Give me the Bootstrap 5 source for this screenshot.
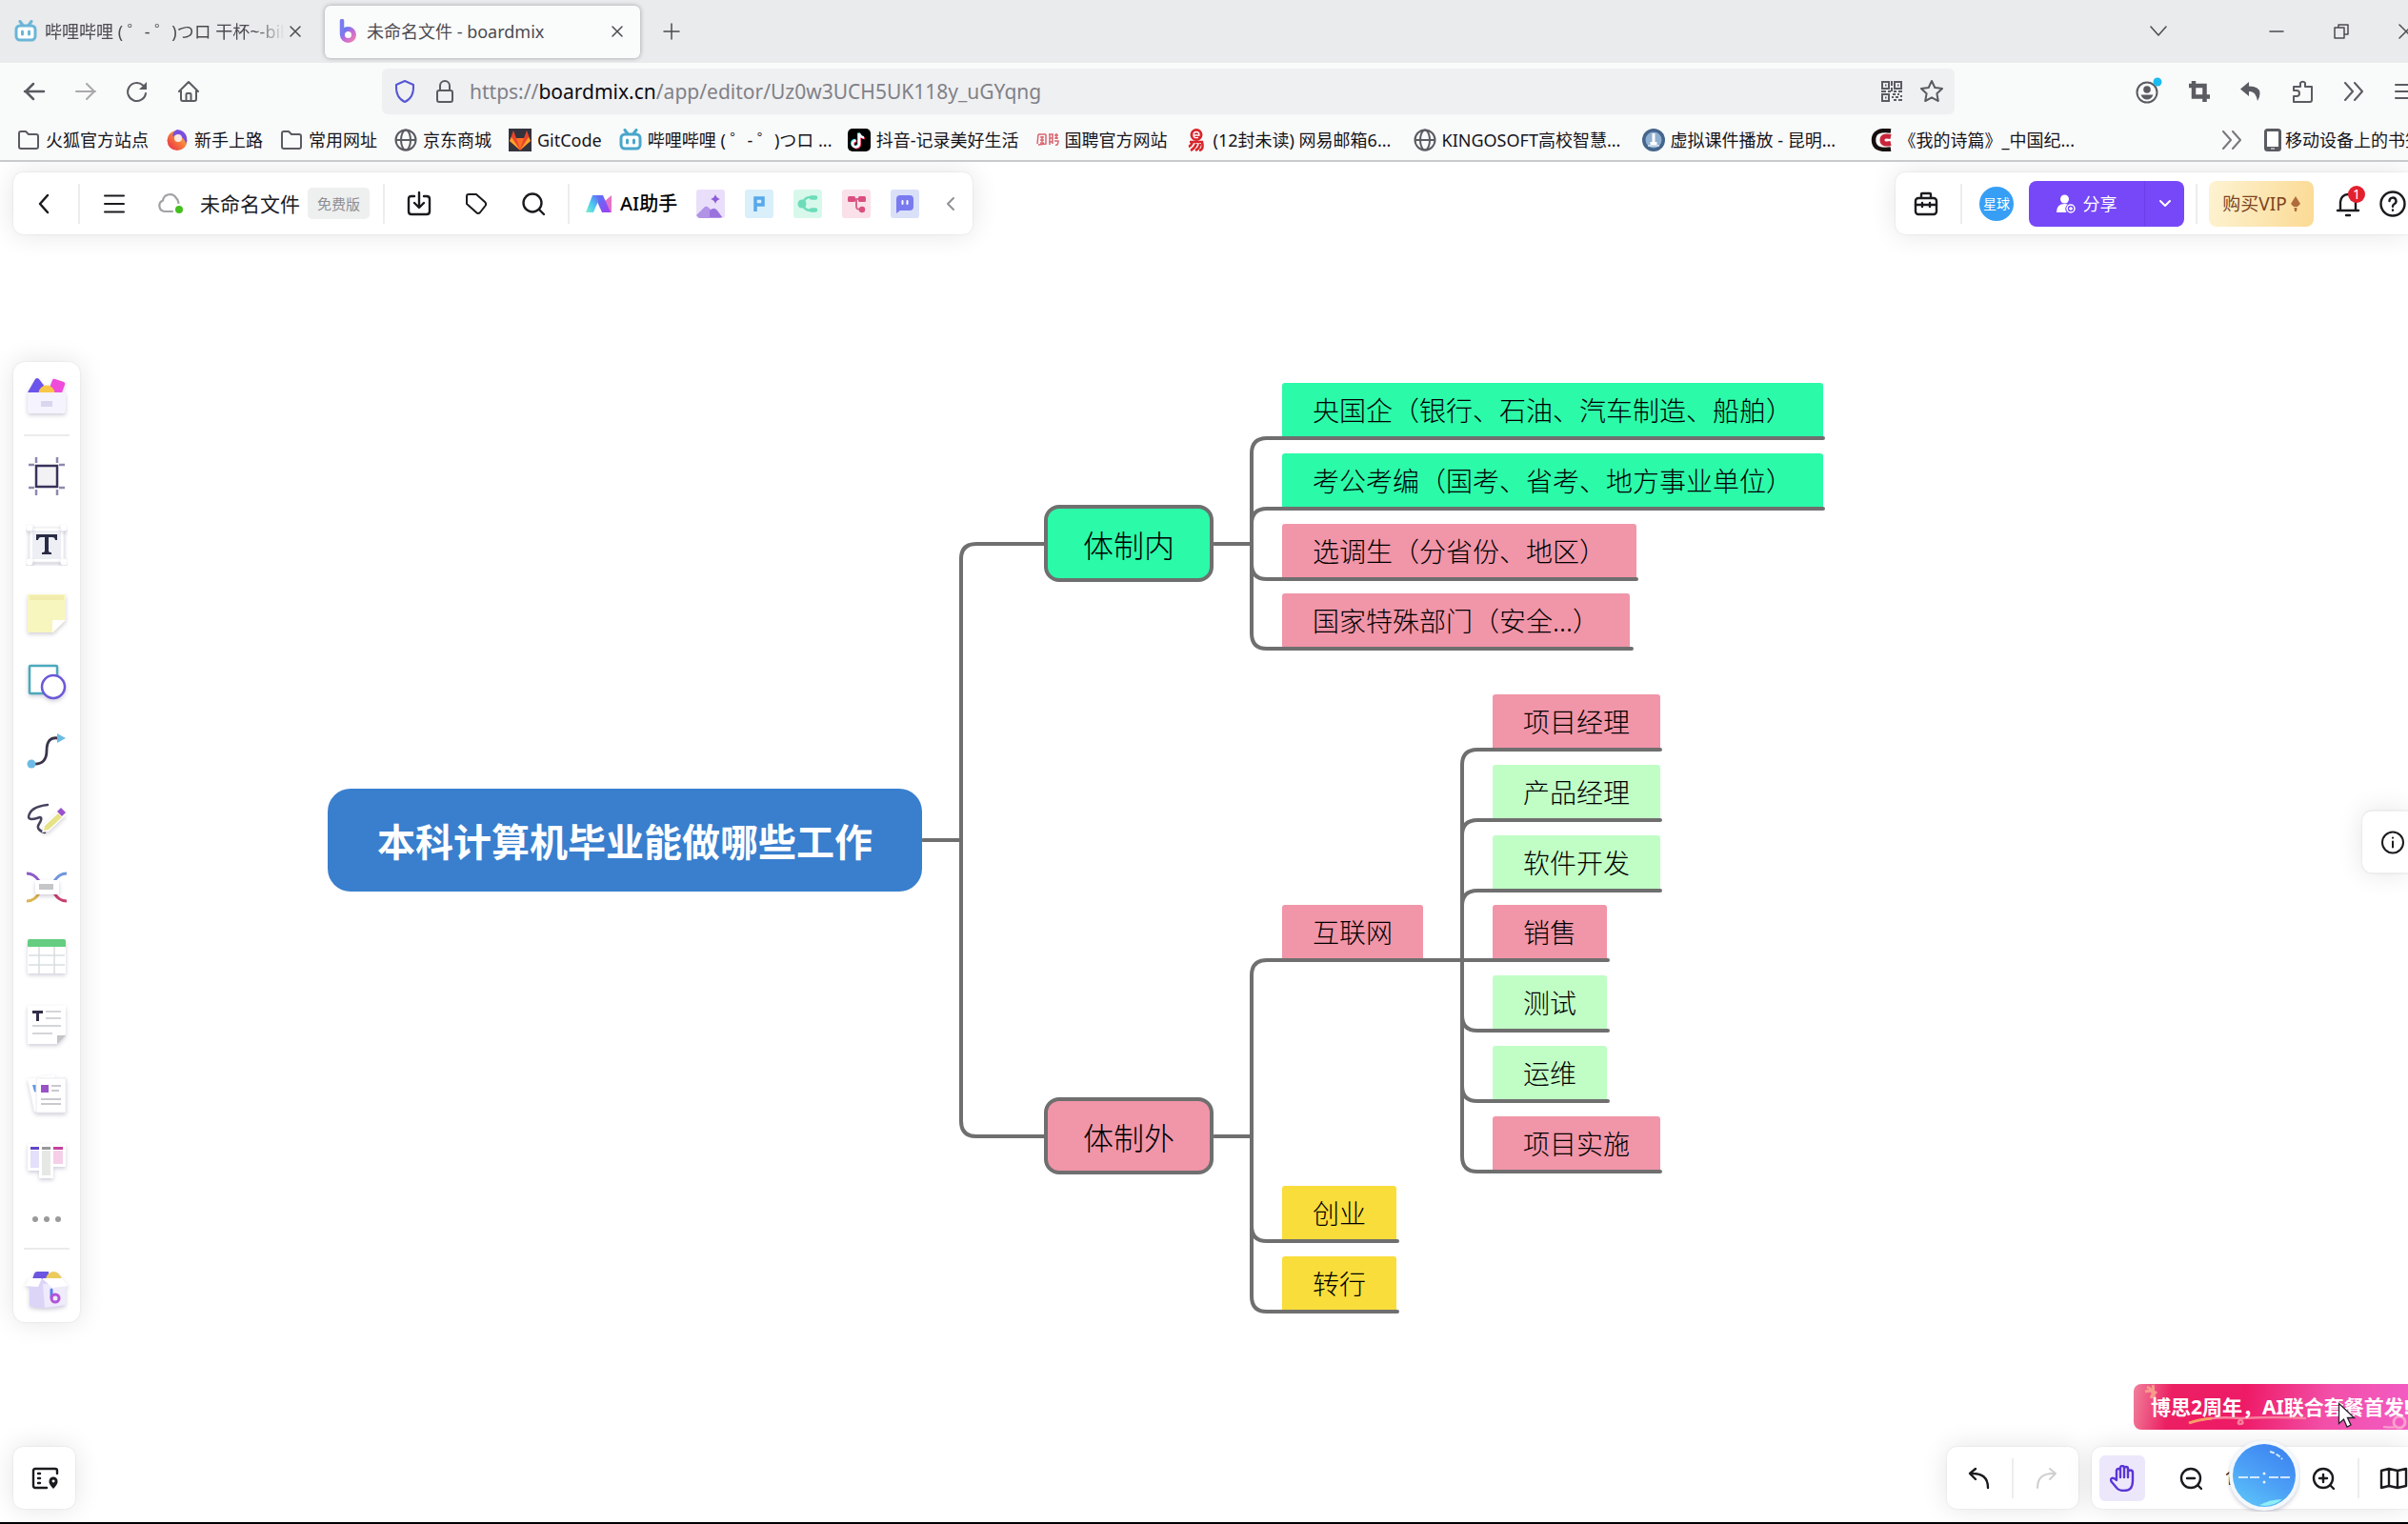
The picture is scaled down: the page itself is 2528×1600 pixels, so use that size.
<!DOCTYPE html>
<html lang="zh-CN">
<head>
<meta charset="utf-8">
<meta name="viewport" content="width=device-width, initial-scale=1">
<title>未命名文件 - boardmix</title>
<link href="https://cdn.jsdelivr.net/npm/bootstrap@5.3.0/dist/css/bootstrap.min.css" rel="stylesheet">
<style>
body{font-family:"Noto Sans","Noto Sans CJK SC",sans-serif;font-size:18px;line-height:24px;color:#15141a;background:#fff;overflow:hidden}
svg{display:block;flex:none}
.line-ic{fill:none;stroke:currentColor;stroke-linecap:round;stroke-linejoin:round}
.line-ic:not([stroke-width]){stroke-width:2}
.plain{border:0;padding:0;background:none;color:inherit;display:flex;align-items:center;justify-content:center;flex:none}
/* browser chrome */
.tabstrip{height:66px;background:#eaebec;color:#4b4b50;overflow:hidden}
.tab-idle{width:327px;padding-left:15px}
.tab-idle .tab-title{width:252px;line-height:32px;overflow:hidden;white-space:nowrap;-webkit-mask-image:linear-gradient(90deg,#000 220px,transparent 252px);mask-image:linear-gradient(90deg,#000 220px,transparent 252px)}
.tab-live{width:331px;height:55px;background:#fafbfb;border-radius:6px;box-shadow:0 0 5px rgba(0,0,0,.32);padding:0 14px;margin-left:14px;gap:10px}
.win-btn{width:68px;height:66px}
.win-group{margin-right:-32px}
.navrow{height:54px;background:#f9fafa;color:#5b5b62;overflow:hidden;padding:6px 0 0 9px}
.nav-btn{width:54px;height:48px}
.nav-tools{margin-right:-24px;margin-left:176px}
.urlbox{height:48px;background:#eff0f2;border-radius:6px;margin-left:176px;padding:0 3px;min-width:0}
.urlbox .plain{width:42px;height:48px}
.url-text{font-size:21px;line-height:36px;color:#818187;padding-left:5px}
.url-text b{font-weight:400;color:#0c0c12}
.bookrow{height:50px;background:#f9fafa;border-bottom:2px solid #c9cacb;padding:5px 0 0 18px;gap:18px;overflow:hidden}
.bookrow a{color:#15141a;text-decoration:none;white-space:nowrap;gap:6px;flex:none}
.bm-long{width:222px}
.bm-tail{width:151px}
.bm-more{margin-left:auto;margin-right:4px;width:24px}
/* board */
.board{background:#fff;overflow:hidden}
.panel{background:#fff;border-radius:10px;box-shadow:0 0 28px rgba(0,0,0,.11),0 0 2px rgba(0,0,0,.12);height:65px;color:#1b1b1f}
.panel-open{border-radius:10px 0 0 10px}
.grp{height:42px;display:flex;align-items:center;padding:0 16px}
.grp+.grp{border-left:2px solid #ededee}
.grp-first{padding-left:12px}
.grp-doc{padding-right:14px}
.grp-user{padding:0 8px 0 18px}
.grp-undo{padding:0 14px}
.sq{width:40px;height:40px}
.tools{gap:20px}
.doc-name{font-size:21px}
.free-tag{background:#eeefef;color:#8d8d90;font-size:15px;border-radius:5px;width:65px;height:33px}
.ai-name{font-size:20px;font-weight:500;color:#000}
.ai-apps{gap:21px;margin:0 26px 0 20px}
.ai-app{width:30px;height:30px;border-radius:3px}
.avatar-dot{width:36px;height:36px;border-radius:50%;background:#369ff5;color:#fff;font-size:14px}
.share{height:48px;border-radius:8px;background:#7748f8;color:#fff;overflow:hidden}
.share-main{width:121px;height:48px;gap:8px}
.share-more{width:42px;height:48px;border-left:1px solid #6d3fea}
.vip{width:110px;height:48px;border-radius:8px;background:linear-gradient(100deg,#fdf3d2,#fbda94);color:#7d4420;font-size:19px;gap:4px}
.help-btn{margin-left:13px}
.count-dot{width:18px;height:18px;border-radius:50%;background:#e3202e;color:#fff;font-size:14px;line-height:18px;text-align:center;left:20px;top:1px}
.over{position:absolute}
.over-tl{left:14px;top:11px}
.over-tr{right:0;top:11px}
.over-side{left:14px}
.over-bl{left:14px;bottom:14px}
.over-br{right:0;bottom:14px;gap:14px}
.over-info{right:0}
.side{width:70px;height:auto;padding:12px 0;border-radius:12px}
.side .plain{width:44px;height:44px}
.side-list{gap:28px}
.side .dots-btn{height:20px}
.side-rule{width:48px;height:2px;background:#ebebec;margin:20px 0}
.sh{filter:drop-shadow(0 2px 2px rgba(40,30,80,.22))}
.node{position:absolute;height:56px;padding:0 32px;border-radius:3px 3px 0 0;font-family:"Noto Sans CJK SC","Noto Sans",sans-serif;font-size:28px;font-weight:300;color:#000;display:flex;align-items:center;white-space:nowrap}
.node-root{height:108px;padding:0 52px;border-radius:24px;font-size:40px;font-weight:700;color:#fff;background:#397fce}
.node-main{height:81px;padding:0 37px;border-radius:16px;border:4px solid #6f6f6f;font-size:32px}
.c-teal{background:#2bfaa9}.c-pink{background:#f195a8}.c-mint{background:#c1fec6}.c-gold{background:#f9dd3b}
.links{position:absolute;left:0;top:0;width:100%;height:100%;fill:none;stroke:#6f6f6f;stroke-width:4;stroke-linecap:round}
.promo{right:0;bottom:97px;width:288px;height:48px;border-radius:8px 0 0 8px;background:linear-gradient(100deg,#f0819b 0,#ec1f63 14%,#ee1a66 40%,#f24fa8 70%,#f25cc4 100%);color:#fff;font-weight:700;font-size:21px;padding-left:18px;white-space:nowrap;overflow:hidden;text-decoration:none}
.promo svg{position:absolute;left:0;top:0}
.promo span{position:relative;line-height:36px}
.pointer{right:54px;bottom:98px}
.hand{width:48px;height:48px;border-radius:6px;background:#ede7fc;color:#5a35d6}
.zoom-val{width:99px;height:40px;font-size:19px;justify-content:flex-start;padding-left:15px;position:relative}
.ball{left:19px;top:-21px}
.taskline{height:2px;background:#000}
</style>
</head>
<body>
<div class="d-flex flex-column vh-100">
<header>
 <div class="tabstrip d-flex align-items-center">
  <div class="tab-idle d-flex align-items-center">
   <svg width="24" height="24" viewBox="0 0 24 24" fill="none" stroke="#6ab6d8" stroke-width="3" stroke-linecap="round"><rect x="2" y="6" width="20" height="15" rx="4" fill="#fff"/><path d="M6 1.5l3 4M18 1.5l-3 4M8.500 12v3M15.500 12v3"/></svg>
   <span class="tab-title ms-2">哔哩哔哩 ( ゜- ゜)つロ 干杯~-bilibili</span>
   <button class="plain ms-1" aria-label="关闭标签页"><svg class="line-ic" width="14" height="14" viewBox="0 0 14 14" stroke-width="1.500"><path d="M2 2l10 10M12 2L2 12"/></svg></button>
  </div>
  <div class="tab-live d-flex align-items-center">
   <svg width="20" height="26" viewBox="0 0 20 26"><defs><linearGradient id="bm" x1="0" y1="0" x2="1" y2="1"><stop offset="0" stop-color="#4d7df6"/><stop offset=".45" stop-color="#b46be0"/><stop offset="1" stop-color="#f27bb0"/></linearGradient></defs><circle cx="10.500" cy="16.500" r="6" fill="none" stroke="url(#bm)" stroke-width="5"/><path d="M4 2v14" stroke="#7b7bf0" stroke-width="4.500" stroke-linecap="round"/></svg>
   <span class="text-nowrap">未命名文件 - boardmix</span>
   <button class="plain ms-auto" aria-label="关闭标签页"><svg class="line-ic" width="20" height="14" viewBox="0 0 20 14" stroke-width="1.500"><path d="M5 2l10 10M15 2L5 12"/></svg></button>
  </div>
  <button class="plain ms-4" aria-label="新建标签页"><svg class="line-ic" width="18" height="18" viewBox="0 0 18 18" stroke-width="1.500"><path d="M9 1v16M1 9h16"/></svg></button>
  <div class="ms-auto d-flex win-group">
   <button class="plain win-btn me-5" aria-label="列出所有标签页"><svg class="line-ic" width="20" height="12" viewBox="0 0 20 12" stroke-width="1.500"><path d="M2 1l8 9 8-9"/></svg></button>
   <button class="plain win-btn ms-2" aria-label="最小化"><svg class="line-ic" width="16" height="16" viewBox="0 0 16 16" stroke-width="1.500"><path d="M1 8h14"/></svg></button>
   <button class="plain win-btn" aria-label="还原"><svg class="line-ic" width="16" height="16" viewBox="0 0 16 16" stroke-width="1.500"><path d="M1 4h10v11H1zM5 4V1h10v10h-4"/></svg></button>
   <button class="plain win-btn" aria-label="关闭"><svg class="line-ic" width="16" height="16" viewBox="0 0 16 16" stroke-width="1.500"><path d="M1 1l14 14M15 1L1 15"/></svg></button>
  </div>
 </div>
 <nav class="navrow d-flex align-items-center" aria-label="导航">
  <button class="plain nav-btn" aria-label="后退"><svg class="line-ic" width="24" height="24" viewBox="0 0 24 24" stroke-width="2.500"><path d="M22 12H2M11 4l-8 8 8 8"/></svg></button>
  <button class="plain nav-btn opacity-50" aria-label="前进"><svg class="line-ic" width="24" height="24" viewBox="0 0 24 24"><path d="M2 12h20M13 4l8 8-8 8"/></svg></button>
  <button class="plain nav-btn" aria-label="刷新"><svg class="line-ic" width="24" height="24" viewBox="0 0 24 24"><path d="M21 14a9.500 9.500 0 1 1-3-8.500"/><path d="M22 2v8h-8z" fill="currentColor" stroke="none"/></svg></button>
  <button class="plain nav-btn" aria-label="主页"><svg class="line-ic" width="24" height="24" viewBox="0 0 24 24"><path d="M2 12L12 2l10 10M4 11v9q0 2 2 2h12q2 0 2-2v-9M9.500 22v-7q0-1 1-1h3q1 0 1 1v7"/></svg></button>
  <div class="urlbox d-flex align-items-center flex-grow-1">
   <button class="plain" aria-label="跟踪保护"><svg class="line-ic" width="24" height="26" viewBox="0 0 24 26"><path d="M12 2l9 4c.5 8-2 15-9 18C5 21 2.500 14 3 6z" stroke="#5757d4"/></svg></button>
   <button class="plain" aria-label="连接安全"><svg class="line-ic" width="22" height="26" viewBox="0 0 22 26"><rect x="3" y="12" width="16" height="12" rx="2"/><path d="M6 12V7a5 5 0 0 1 10 0v5"/></svg></button>
   <div class="url-text flex-grow-1 text-nowrap" role="textbox" tabindex="0" aria-label="地址">https://<b>boardmix.cn</b>/app/editor/Uz0w3UCH5UK118y_uGYqng</div>
   <button class="plain" aria-label="二维码"><svg width="24" height="24" viewBox="0 0 24 24" fill="none" stroke="#5b5b62" stroke-width="2"><path d="M2 2h7v7H2zM15 2h7v7h-7zM2 15h7v7H2z"/><path d="M5 5.500h1.500M18 5.500h1.500M5 18.500h1.500M12 1v5M12 8v4M1 12h5M8 12h3M14 12h3M19 12h4M13 15h3M18 15h2M21 17h2M12 18h2M16 18h3M14 21h3M19 21h4"/></svg></button>
   <button class="plain" aria-label="收藏"><svg class="line-ic" width="26" height="26" viewBox="0 0 26 26"><path d="M13 2l3.300 7 7.700 1-5.600 5.300 1.400 7.700L13 19.300 6.200 23l1.400-7.700L2 10l7.700-1z"/></svg></button>
  </div>
  <div class="d-flex nav-tools">
   <button class="plain nav-btn" aria-label="账户"><svg class="line-ic" width="30" height="32" viewBox="0 0 30 32"><circle cx="14" cy="17" r="10.500"/><circle cx="14" cy="14" r="3.800" fill="currentColor" stroke="none"/><path d="M7.500 19.500h13q-2 5-6.500 5t-6.500-5z" fill="currentColor" stroke="none"/><circle cx="25" cy="6" r="4.500" fill="#1cbcf0" stroke="none"/></svg></button>
   <button class="plain nav-btn" aria-label="截图"><svg width="24" height="24" viewBox="0 0 24 24" fill="none" stroke="#5b5b62" stroke-width="4.500"><path d="M6 1v16.500h17M1 6h16.500v17"/></svg></button>
   <button class="plain nav-btn" aria-label="撤销关闭"><svg width="24" height="24" viewBox="0 0 24 24" fill="#5b5b62"><path d="M10 2L1 9.500 10 17v-5q7-1 9 10 8-15-9-15.500z"/></svg></button>
   <button class="plain nav-btn" aria-label="扩展"><svg class="line-ic" width="24" height="26" viewBox="0 0 24 26"><path d="M3 24V18h3a3 3 0 0 0 0-6H3V8h7V4a3 3 0 0 1 5 0v4h7v14q0 2-2 2z"/></svg></button>
   <button class="plain nav-btn" aria-label="更多工具"><svg class="line-ic" width="22" height="20" viewBox="0 0 22 20"><path d="M2 1l8 9-8 9M12 1l8 9-8 9"/></svg></button>
   <button class="plain nav-btn" aria-label="菜单"><svg class="line-ic" width="22" height="20" viewBox="0 0 22 20"><path d="M1 3h20M1 10h20M1 17h20"/></svg></button>
  </div>
 </nav>
 <div class="bookrow d-flex align-items-center">
  <a href="#" class="d-flex align-items-center"><svg class="line-ic" width="24" height="24" viewBox="0 0 24 24"><path stroke="#5b5b62" d="M2 5q0-2 2-2h5l3 3h8q2 0 2 2v11q0 2-2 2H4q-2 0-2-2z"/></svg>火狐官方站点</a>
  <a href="#" class="d-flex align-items-center"><svg width="24" height="24" viewBox="0 0 24 24"><defs><linearGradient id="ff" x1="0" y1="1" x2="1" y2="0"><stop offset="0" stop-color="#e8234e"/><stop offset=".5" stop-color="#f5793a"/><stop offset="1" stop-color="#ffd04a"/></linearGradient></defs><circle cx="12" cy="12.500" r="10.500" fill="url(#ff)"/><path d="M12 1a11 11 0 0 1 10 8q1 4-1 7-1-7-9-9-4 0-5 2 0-6 5-8z" fill="#7a4fe0"/><circle cx="13" cy="10" r="4" fill="#fbe6e0"/></svg>新手上路</a>
  <a href="#" class="d-flex align-items-center"><svg class="line-ic" width="24" height="24" viewBox="0 0 24 24"><path stroke="#5b5b62" d="M2 5q0-2 2-2h5l3 3h8q2 0 2 2v11q0 2-2 2H4q-2 0-2-2z"/></svg>常用网址</a>
  <a href="#" class="d-flex align-items-center"><svg width="24" height="24" viewBox="0 0 24 24" fill="none" stroke="#5b5b62" stroke-width="2"><circle cx="12" cy="12" r="10.500"/><ellipse cx="12" cy="12" rx="5" ry="10.500"/><path d="M2 12h20"/></svg>京东商城</a>
  <a href="#" class="d-flex align-items-center"><svg width="24" height="24" viewBox="0 0 24 24"><path fill="#33333d" d="M0 0h24v24H0z"/><path d="M1 13L5 2l3 8h8l3-8 4 11-11 10z" fill="#e8452c"/><path d="M8 10h8l-4 12z" fill="#fc6d26"/><path d="M1 13l2-4 9 13.500zM23 13l-2-4-9 13.500z" fill="#fca326"/></svg>GitCode</a>
  <a href="#" class="d-flex align-items-center bm-long"><svg width="24" height="24" viewBox="0 0 24 24" fill="none" stroke="#4aa6cc" stroke-width="3" stroke-linecap="round"><rect x="2" y="6" width="20" height="15" rx="4" fill="#fff"/><path d="M6 1.500l3 4M18 1.500l-3 4M8.500 12v3M15.500 12v3"/></svg><span>哔哩哔哩 ( ゜- ゜)つロ ...</span></a>
  <a href="#" class="d-flex align-items-center"><svg width="24" height="24" viewBox="0 0 24 24" fill="none" stroke-width="2.500"><rect width="24" height="24" rx="5" fill="#000"/><path d="M12 5v11a3.500 3.500 0 1 1-3.500-3.500M12 5q1 4 5 4.500" stroke="#29e0e4" transform="translate(-.8 -.6)"/><path d="M12 5v11a3.500 3.500 0 1 1-3.500-3.500M12 5q1 4 5 4.500" stroke="#f0335c" transform="translate(.9 .7)"/><path d="M12 5v11a3.500 3.500 0 1 1-3.500-3.500M12 5q1 4 5 4.500" stroke="#fff"/></svg>抖音-记录美好生活</a>
  <a href="#" class="d-flex align-items-center"><svg width="24" height="24" viewBox="0 0 24 24" fill="none" stroke="#dc6670" stroke-width="1.500"><path d="M2 6h8M2 6l-1 10M10 6v10l-8 1M4 9h4M4 12h4M6 8v6M4 15h4M13 6h5M14 6v11M17 6v10M14 10h3M13 14h4M19 7h4M21 5v6M19 10h4M19 13h4q0 5-3 4"/></svg>国聘官方网站</a>
  <a href="#" class="d-flex align-items-center bm-long"><svg width="24" height="24" viewBox="0 0 24 24" fill="none" stroke="#d8262c" stroke-width="2.500"><circle cx="12" cy="6.500" r="6.500" fill="#d8262c" stroke="none"/><path d="M9 7h6q0-3.500-3-3.500T9 7t5 2.500" stroke="#fff" stroke-width="1.300"/><path d="M5 14h13q2 8-3 9M8 14q-1 4-4 5M12 16q-2 5-6 7M16 16q-1 5-5 7"/></svg><span>(12封未读) 网易邮箱6...</span></a>
  <a href="#" class="d-flex align-items-center bm-long"><svg width="24" height="24" viewBox="0 0 24 24" fill="none" stroke="#5b5b62" stroke-width="2"><circle cx="12" cy="12" r="10.500"/><ellipse cx="12" cy="12" rx="5" ry="10.500"/><path d="M2 12h20"/></svg><span>KINGOSOFT高校智慧...</span></a>
  <a href="#" class="d-flex align-items-center bm-long"><svg width="24" height="24" viewBox="0 0 24 24"><circle cx="12" cy="12" r="12" fill="#44658c"/><circle cx="12" cy="12" r="8.500" fill="#8fb0d0"/><path d="M10.500 5h3v9h2v3h-7v-3h2z" fill="#fff"/><path d="M6 18h12" stroke="#dfe9f3" stroke-width="1.500"/></svg><span>虚拟课件播放 - 昆明...</span></a>
  <a href="#" class="d-flex align-items-center bm-long"><svg width="24" height="24" viewBox="0 0 24 24" fill="none"><path d="M21 2.500Q3 0 3 12t18 9.500" stroke="#16100f" stroke-width="4.500"/><path d="M21 8.500q-9-2-9 3.500t9 3.500" stroke="#c9253a" stroke-width="5"/></svg><span>《我的诗篇》_中国纪...</span></a>
  <button class="plain bm-more" aria-label="更多书签"><svg class="line-ic" width="22" height="20" viewBox="0 0 22 20"><path stroke="#77777c" d="M2 1l8 9-8 9M12 1l8 9-8 9"/></svg></button>
  <a href="#" class="d-flex align-items-center gap-1 bm-tail"><svg width="18" height="24" viewBox="0 0 18 24"><rect x="1.500" y="1.500" width="15" height="21" rx="2" fill="#fff" stroke="#5b5b62" stroke-width="3"/><path d="M2 19h14v4H2z" fill="#5b5b62"/><path d="M7 21h4" stroke="#fff"/></svg>移动设备上的书签</a>
 </div>
</header>

<main class="board position-relative flex-grow-1">
 <svg class="links" aria-hidden="true">
  <path d="M969 712h40M1096 401h-71q-16 0-16 16v590q0 16 16 16h71"/>
  <path d="M1275 401h39M1914 290H1330q-16 0-16 16v189q0 16 16 16h383M1914 364H1330q-16 0-16 16M1314 422q0 16 16 16h388"/>
  <path d="M1275 1023h39M1535 838H1330q-16 0-16 16v337q0 16 16 16h137M1314 1117q0 16 16 16h137"/>
  <path d="M1743 617h-192q-16 0-16 16v411q0 16 16 16h192M1743 691h-192q-16 0-16 16M1743 765h-192q-16 0-16 16M1535 838h153M1535 896q0 16 16 16h137M1535 970q0 16 16 16h137"/>
 </svg>
 <div class="node node-root" style="left:344px;top:658px">本科计算机毕业能做哪些工作</div>
 <div class="node node-main c-teal" style="left:1096px;top:360px">体制内</div>
 <div class="node node-main c-pink" style="left:1096px;top:982px">体制外</div>
 <div class="node c-teal" style="left:1346px;top:232px">央国企（银行、石油、汽车制造、船舶）</div>
 <div class="node c-teal" style="left:1346px;top:306px">考公考编（国考、省考、地方事业单位）</div>
 <div class="node c-pink" style="left:1346px;top:380px">选调生（分省份、地区）</div>
 <div class="node c-pink" style="left:1346px;top:453px">国家特殊部门（安全...）</div>
 <div class="node c-pink" style="left:1346px;top:780px">互联网</div>
 <div class="node c-gold" style="left:1346px;top:1075px">创业</div>
 <div class="node c-gold" style="left:1346px;top:1149px">转行</div>
 <div class="node c-pink" style="left:1567px;top:559px">项目经理</div>
 <div class="node c-mint" style="left:1567px;top:633px">产品经理</div>
 <div class="node c-mint" style="left:1567px;top:707px">软件开发</div>
 <div class="node c-pink" style="left:1567px;top:780px">销售</div>
 <div class="node c-mint" style="left:1567px;top:854px">测试</div>
 <div class="node c-mint" style="left:1567px;top:928px">运维</div>
 <div class="node c-pink" style="left:1567px;top:1002px">项目实施</div>

 <div class="panel over over-tl d-flex align-items-center">
  <div class="grp grp-first"><button class="plain sq" aria-label="返回"><svg class="line-ic" width="14" height="22" viewBox="0 0 14 22" stroke-width="2.500"><path d="M11 2L3 11l8 9"/></svg></button></div>
  <div class="grp grp-doc">
   <button class="plain sq" aria-label="主菜单"><svg class="line-ic" width="22" height="20" viewBox="0 0 22 20"><path d="M1 1.500h20M1 10h20M1 18.500h20"/></svg></button>
   <svg class="ms-4" width="34" height="24" viewBox="0 0 34 24" fill="none"><path d="M17 20H9a6 6 0 0 1-2-11.500A7.500 7.500 0 0 1 21 6q2 1.500 2.500 5" stroke="#a2a2a6" stroke-width="2.200" stroke-linecap="round"/><circle cx="24" cy="18" r="4" fill="#45bf20"/></svg>
   <span class="doc-name mx-2 ps-1">未命名文件</span>
   <span class="free-tag d-flex align-items-center justify-content-center">免费版</span>
  </div>
  <div class="grp tools">
   <button class="plain sq" aria-label="导出"><svg class="line-ic" width="26" height="26" viewBox="0 0 26 26" stroke-width="2.400"><path d="M8 5H5q-3 0-3 3v13q0 3 3 3h16q3 0 3-3V8q0-3-3-3h-3M13 1v15M8 12l5 5 5-5"/></svg></button>
   <button class="plain sq" aria-label="标签"><svg class="line-ic" width="26" height="26" viewBox="0 0 26 26"><path d="M3 5q0-2 2-2h8l9 8q2 2 .5 4L17 22q-2 2-4 0L3 13z"/></svg></button>
   <button class="plain sq" aria-label="搜索"><svg class="line-ic" width="26" height="26" viewBox="0 0 26 26" stroke-width="2.400"><circle cx="12" cy="12" r="9.500"/><path d="M19 19l5 5"/></svg></button>
  </div>
  <div class="grp">
   <button class="plain" aria-label="AI助手"><svg width="29" height="20" viewBox="0 0 29 20"><defs><linearGradient id="g1" x1="1" y1="0" x2="0" y2="1"><stop offset="0" stop-color="#6a5af5"/><stop offset=".5" stop-color="#4ac5f2"/><stop offset="1" stop-color="#7cf0c8"/></linearGradient><linearGradient id="g2" x1="0" y1="0" x2="1" y2="1"><stop offset="0" stop-color="#4f7df8"/><stop offset="1" stop-color="#a03df0"/></linearGradient></defs><path d="M20 8l8-7v18h-5z" fill="#e573c8"/><path d="M10 1h9l8 18h-9z" fill="url(#g2)"/><path d="M8 1h6q2 1 1 4L9 19H1z" fill="url(#g1)"/></svg><span class="ai-name ms-2">AI助手</span></button>
   <div class="d-flex ai-apps">
    <button class="plain ai-app" aria-label="AI 图片"><svg width="30" height="30" viewBox="0 0 30 30"><rect width="30" height="30" rx="3" fill="#eadffa"/><path d="M0 27l9-9q2-1 4 1l2 2 2-1q2-1 4 1l6 8-2 1H3z" fill="#b193e6"/><path d="M14 22l4-2q2 0 4 2l5 7H14z" fill="#9a72de"/><path d="M20 5q1 4 5 5-4 1-5 5-1-4-5-5 4-1 5-5z" fill="#8e5cd6"/></svg></button>
    <button class="plain ai-app" aria-label="AI PPT"><svg width="30" height="30" viewBox="0 0 30 30"><rect width="30" height="30" rx="3" fill="#d9effa"/><path d="M11 23V9h8v7h-8" fill="none" stroke="#56a9ea" stroke-width="3.500"/></svg></button>
    <button class="plain ai-app" aria-label="AI 思维导图"><svg width="30" height="30" viewBox="0 0 30 30"><rect width="30" height="30" rx="3" fill="#d8f8ec"/><path d="M21 8h-3q-7 0-8 7 1 7 8 7h3" fill="none" stroke="#6ddcb9" stroke-width="2.500"/><circle cx="9" cy="15" r="4.500" fill="#6ddcb9"/><path d="M19 8.500h4M19 21.500h4" stroke="#6ddcb9" stroke-width="4.500" stroke-linecap="round"/></svg></button>
    <button class="plain ai-app" aria-label="AI 流程图"><svg width="30" height="30" viewBox="0 0 30 30"><rect width="30" height="30" rx="3" fill="#fae0e8"/><path d="M9 10h12M15 10v8q0 3 5 3" fill="none" stroke="#da648c" stroke-width="2"/><rect x="6" y="7" width="8" height="6" rx="1.500" fill="#da4f80"/><rect x="17" y="7" width="8" height="6" rx="1.500" fill="#da4f80"/><circle cx="21" cy="21" r="3.200" fill="#da4f80"/></svg></button>
    <button class="plain ai-app" aria-label="AI 对话"><svg width="30" height="30" viewBox="0 0 30 30"><rect width="30" height="30" rx="3" fill="#d9e0f8"/><path d="M6 10q0-4 4-4h10q4 0 4 4v8q0 4-4 4H10l-4 3z" fill="#7a7af0"/><path d="M12.500 12v3M17.500 12v3" stroke="#fff" stroke-width="2" stroke-linecap="round"/></svg></button>
   </div>
   <button class="plain" aria-label="收起"><svg class="line-ic" width="14" height="16" viewBox="0 0 14 16"><path stroke="#919195" d="M10 2L4 8l6 6"/></svg></button>
  </div>
 </div>

 <div class="panel panel-open over over-tr d-flex align-items-center">
  <div class="grp grp-first"><button class="plain sq" aria-label="工具箱"><svg class="line-ic" width="26" height="26" viewBox="0 0 26 26" stroke-width="2.400"><rect x="2" y="7" width="22" height="17" rx="3"/><path d="M8 6V3q0-1 1-1h8q1 0 1 1v3M2 14h22M9 12v4M17 12v4"/></svg></button></div>
  <div class="grp grp-user">
   <span class="avatar-dot d-flex align-items-center justify-content-center me-3">星球</span>
   <div class="share d-flex me-1">
    <button class="plain share-main"><svg width="20" height="20" viewBox="0 0 20 20" fill="#fff"><circle cx="8.500" cy="5" r="4.500"/><path d="M0 19q0-9 8.500-9 2 0 3.500.8a5 5 0 0 0-2 7.200l.5 1z"/><circle cx="15" cy="15" r="4" fill="none" stroke="#fff" stroke-width="1.500"/><path d="M15 13v4M13 15h4" stroke="#fff" stroke-width="1.300"/></svg>分享</button>
    <button class="plain share-more" aria-label="分享选项"><svg class="line-ic" width="14" height="10" viewBox="0 0 14 10"><path d="M2 2l5 5 5-5"/></svg></button>
   </div>
  </div>
  <div class="grp ps-2 pe-0">
   <button class="plain vip ms-1"><span>购买VIP</span><svg width="10" height="16" viewBox="0 0 10 16"><path d="M5 0l5 8-3 3H3L0 8zM3.500 12h3l-.5 4H4z" fill="#b06a3c"/></svg></button>
   <button class="plain sq ms-3 position-relative" aria-label="通知"><svg class="line-ic" width="26" height="28" viewBox="0 0 26 28" stroke-width="2.400"><path d="M5 20v-8a8 8 0 0 1 16 0v8M2 21h22M11 26h4"/></svg><span class="over count-dot">1</span></button>
   <button class="plain help-btn" aria-label="帮助"><svg class="line-ic" width="30" height="30" viewBox="0 0 30 30" stroke-width="2.400"><circle cx="14" cy="15" r="12.500"/><path d="M10.500 12a3.500 3.500 0 1 1 5 3.200q-1.500.8-1.500 2.600M14 21.500v.2"/></svg></button>
  </div>
 </div>

 <aside class="panel side over over-side top-50 translate-middle-y d-flex flex-column align-items-center">
  <button class="plain" aria-label="素材"><svg class="sh" width="44" height="44" viewBox="0 0 44 44"><path d="M2 20l8-14q2-2 4 0l6 8v6z" fill="#6a54ec"/><path d="M24 18l4-11q1-2 3-1l9 3q2 1 1 3l-3 8H25z" fill="#f04cdb"/><circle cx="22" cy="21" r="8.500" fill="#f7c748"/><path d="M2 20h40v20q0 2-2 2H4q-2 0-2-2z" fill="#f5f3fd"/><path d="M16 29h12v6H16z" fill="#dad6f0"/></svg></button>
  <div class="side-rule"></div>
  <div class="side-list d-flex flex-column align-items-center">
   <button class="plain" aria-label="画框"><svg width="44" height="44" viewBox="0 0 44 44" fill="none"><path d="M11 2v6M33 2v6M11 36v6M33 36v6M3 10h6M35 10h6M3 34h6M35 34h6" stroke="#9088b0" stroke-width="2.500"/><rect x="11" y="11" width="22" height="22" fill="#f2f2f4" stroke="#39325a" stroke-width="2.500"/></svg></button>
   <button class="plain" aria-label="文本"><svg width="44" height="44" viewBox="0 0 44 44"><rect class="sh" x="4" y="4" width="36" height="36" rx="1" fill="#fff" stroke="#ececef"/><rect x="7" y="7" width="30" height="30" fill="#edeff5"/><path d="M11 11h22v6h-2q-.5-3-3-3h-4v14q0 2 3 2v2H17v-2q3 0 3-2V14h-4q-2.500 0-3 3h-2z" fill="#292c44"/><g class="sh" fill="#fff"><circle cx="4" cy="4" r="3.500"/><circle cx="40" cy="4" r="3.500"/><circle cx="4" cy="40" r="3.500"/><circle cx="40" cy="40" r="3.500"/></g></svg></button>
   <button class="plain" aria-label="便签"><svg class="sh" width="44" height="44" viewBox="0 0 44 44"><path d="M2 2h40v27L29 42H2z" fill="#f8f6bf"/><path d="M4 3h36v5H4z" fill="#f1ecad"/><path d="M28 42V31q0-2 2-2h12z" fill="#fff"/></svg></button>
   <button class="plain" aria-label="形状"><svg class="sh" width="44" height="44" viewBox="0 0 44 44" fill="#fff" stroke-width="2.500"><rect x="4" y="5" width="29" height="29" rx="1" stroke="#4aa9bd"/><circle cx="29" cy="27" r="12" stroke="#6a58d8"/></svg></button>
   <button class="plain" aria-label="连线"><svg width="44" height="44" viewBox="0 0 44 44" fill="none"><path d="M8 36q14 1 14-14T34 9" stroke="#38344a" stroke-width="2.800"/><circle cx="6" cy="36" r="4.500" fill="#6dbbe4"/><path d="M33 4l9 5-9 5z" fill="#6dbbe4"/></svg></button>
   <button class="plain" aria-label="画笔"><svg width="44" height="44" viewBox="0 0 44 44" fill="none"><path d="M23 7Q4 9 3 20q1 4 12 0 3 1-1 7-4 6 6 9" stroke="#46425c" stroke-width="2.500" stroke-linecap="round"/><path class="sh" d="M17 36l2-8 17-16 6 6-18 17z" fill="#fff"/><path d="M19 34l1-5 14-13 4 4-14 13z" fill="#e6e287"/><path d="M33 14l4-4 5 5-4 4z" fill="#9a52cc"/></svg></button>
   <button class="plain" aria-label="思维导图"><svg width="44" height="44" viewBox="0 0 44 44" fill="none" stroke-width="3"><path d="M1 7q8 0 13 8" stroke="#8c5cc8"/><path d="M43 7q-8 0-13 8" stroke="#7096dc"/><path d="M1 36q8 0 13-8" stroke="#dcb450"/><path d="M43 36q-8 0-13-8" stroke="#c8406e"/><rect class="sh" x="10" y="14" width="25" height="15" rx="2" fill="#fff"/><path d="M14 18h15v6H14z" fill="#c6c6c8"/></svg></button>
   <button class="plain" aria-label="表格"><svg class="sh" width="44" height="44" viewBox="0 0 44 44"><path d="M2 6h40v34H2z" fill="#fff"/><path d="M2 12V6q0-2 2-2h36q2 0 2 2v6z" fill="#64cd80"/><path d="M14 12v28M30 12v28M3 21h38M3 31h38" stroke="#d8dedf" stroke-width="1.500"/></svg></button>
   <button class="plain" aria-label="文档"><svg class="sh" width="44" height="44" viewBox="0 0 44 44"><path d="M2 2h40v30L33 42H2z" fill="#fff"/><path d="M33 42V33h9z" fill="#c4c4c8"/><path d="M7 7h11v3h-4v8h-3v-8H7z" fill="#332e48"/><path d="M21 8h16M21 15h16M7 23h30M7 31h21" stroke="#d3d5da" stroke-width="2"/></svg></button>
   <button class="plain" aria-label="卡片"><svg class="sh" width="44" height="44" viewBox="0 0 44 44"><path d="M2 7l28-5 5 34-26 5z" fill="#fff"/><path d="M7 13h4v8l-2-1z" fill="#6596dc"/><path d="M11 6h31v36H11z" fill="#fff" stroke="#ececf0"/><path d="M16 13h8v8h-8z" fill="#9a52c8"/><path d="M27 14h10M27 19h8M16 28h21M16 33h21" stroke="#c9c9ce" stroke-width="2"/></svg></button>
   <button class="plain" aria-label="看板"><svg class="sh" width="44" height="44" viewBox="0 0 44 44"><path d="M2 3h13v28H2zM14 3h15v36H14zM28 3h14v24H28z" fill="#fff"/><path d="M5 6h9v3H5z" fill="#6047c8"/><path d="M5 10h9v18H5z" fill="#e4dffa"/><path d="M17 6h9v3h-9z" fill="#98989c"/><path d="M17 10h9v26h-9z" fill="#e6e8e6"/><path d="M29 6h10v3H29z" fill="#c8409c"/><path d="M29 10h10v14H29z" fill="#f5cfe8"/></svg></button>
   <button class="plain dots-btn" aria-label="更多"><svg width="32" height="8" viewBox="0 0 32 8" fill="#9a9a9c"><circle cx="4" cy="4" r="3"/><circle cx="16" cy="4" r="3"/><circle cx="28" cy="4" r="3"/></svg></button>
  </div>
  <div class="side-rule"></div>
  <button class="plain" aria-label="应用"><svg class="sh" width="48" height="44" viewBox="0 0 48 44"><path d="M9 11l2-6q1-2 3-2h12v10z" fill="#6c55e0"/><path d="M23 11q1-7 8-8 6 0 9 8z" fill="#eccb5c"/><path d="M6 16l12-5h20l6 5v22q-9 3-20 3T6 39z" fill="#dcd5f8"/><path d="M20 16h24v22l-22 3z" fill="#efebfc"/><path d="M6 10h13l-4 9L1 18zM19 10h21l7 8-17 2z" fill="#fff"/><path d="M29 22v8" stroke="#5b80ee" stroke-width="3" stroke-linecap="round"/><circle cx="33" cy="31" r="4" fill="none" stroke="#b254d8" stroke-width="3"/></svg></button>
 </aside>

 <div class="panel panel-open over over-info top-50 translate-middle-y d-flex align-items-center ps-3 pe-1"><button class="plain" aria-label="信息"><svg class="line-ic" width="28" height="28" viewBox="0 0 28 28"><circle cx="16" cy="14" r="11"/><path d="M16 13v6M16 9v.2"/></svg></button></div>

 <div class="panel over over-bl d-flex align-items-center px-3"><button class="plain" aria-label="图层列表"><svg class="line-ic" width="33" height="26" viewBox="0 0 33 26" stroke-width="2.400"><path d="M19 23H7q-2 0-2-2V5q0-2 2-2h21q2 0 2 2v3M10 8h2M10 13h2M10 18h2"/><path d="M26 24q-5-5-4.500-8a4.500 4.500 0 0 1 9 0q.5 3-4.500 8zM26 14.500a1.500 1.500 0 1 0 .1 0" fill="currentColor" fill-rule="evenodd" stroke="none"/></svg></button></div>

 <div class="over over-br d-flex">
  <div class="panel d-flex align-items-center">
   <div class="grp grp-undo"><button class="plain sq" aria-label="撤销"><svg class="line-ic" width="24" height="24" viewBox="0 0 24 24" stroke-width="2.400"><path d="M8 2L2 7l6 6M3 7q18-1 18 15"/></svg></button></div>
   <div class="grp grp-undo"><button class="plain sq" aria-label="重做"><svg class="line-ic" width="24" height="24" viewBox="0 0 24 24"><path stroke="#cfcfd1" d="M16 2l6 5-6 6M21 7Q3 6 3 22"/></svg></button></div>
  </div>
  <div class="panel panel-open d-flex align-items-center ps-2">
   <button class="plain hand me-2" aria-label="抓手"><svg class="line-ic" width="26" height="28" viewBox="0 0 26 28" stroke-width="2.400"><path d="M7 15V6a2 2 0 0 1 4 0v7V3a2 2 0 0 1 4 0v10V4a2 2 0 0 1 4 0v9V8a2.500 2.500 0 0 1 5 0v9q0 10-9 10-5 0-7-2l-6-7q-2-3 0-4t5 2z"/></svg></button>
   <div class="grp ms-1">
    <button class="plain sq" aria-label="缩小"><svg class="line-ic" width="24" height="24" viewBox="0 0 24 24" stroke-width="2.400"><circle cx="12" cy="12" r="10"/><path d="M8 12h8M19.500 19.500L23 23"/></svg></button>
    <button class="plain zoom-val" aria-label="缩放比例">1<svg class="over ball" width="76" height="76" viewBox="0 0 76 76"><defs><linearGradient id="bl" x1=".8" y1="0" x2=".2" y2="1"><stop offset="0" stop-color="#3b82f0"/><stop offset=".5" stop-color="#4b9ef6"/><stop offset="1" stop-color="#5cc3f8"/></linearGradient></defs><circle class="sh" cx="38" cy="38" r="37" fill="#f2f8fc"/><circle cx="38" cy="38" r="33" fill="url(#bl)"/><path d="M11 40h10M23 40h10M43 40h10M55 40h10" stroke="#fff" stroke-width="1.500"/><circle cx="38" cy="36" r="1.500" fill="#e4f4ff"/><circle cx="38" cy="45" r="1.500" fill="#e4f4ff"/><path d="M44 13q8 2 13 8" stroke="#d4eaff" stroke-width="2" stroke-dasharray="5 2" fill="none"/><path d="M33 69q12-6 24-6-8 7-19 7z" fill="#8eeef4"/></svg></button>
    <button class="plain sq" aria-label="放大"><svg class="line-ic" width="24" height="24" viewBox="0 0 24 24" stroke-width="2.400"><circle cx="12" cy="12" r="10"/><path d="M8 12h8M12 8v8M19.500 19.500L23 23"/></svg></button>
   </div>
   <div class="grp pe-0"><button class="plain" aria-label="小地图"><svg class="line-ic" width="35" height="24" viewBox="0 0 35 24" stroke-width="2.400"><path d="M7 4l8-2 9 2 9-2v18l-9 2-9-2-8 2zM15 2v18M24 4v18"/></svg></button></div>
  </div>
 </div>

 <a href="#" class="promo over d-flex align-items-center"><svg width="288" height="48" viewBox="0 0 288 48" fill="none"><path d="M14 3q6 2 8 12M20 1q2 6-2 14M12 8q8-2 12 2" stroke="#f89a8c" stroke-width="3"/><path d="M58 41q26-8 54-5 5 6 0 6t1-6q38-2 68 0" stroke="#f8809c" stroke-width="2.500"/><path d="M58 41q10-4 24-5" stroke="#f8a060" stroke-width="2.500"/><circle cx="279" cy="40" r="6" stroke="#f9a0cc" stroke-width="3"/><path d="M262 45q8 1 14 0" stroke="#f9a0cc" stroke-width="2"/></svg><span>博思2周年，AI联合套餐首发!</span></a>
 <svg class="over pointer" width="20" height="28" viewBox="0 0 20 28"><path d="M1.500 1.500v21l5-4.500 3.500 8 4-2-3.500-7.500h7z" fill="#fff" stroke="#22222a" stroke-width="1.300"/></svg>
</main>
<div class="taskline"></div>
</div>
<script src="https://cdn.jsdelivr.net/npm/bootstrap@5.3.0/dist/js/bootstrap.bundle.min.js"></script>
</body>
</html>
